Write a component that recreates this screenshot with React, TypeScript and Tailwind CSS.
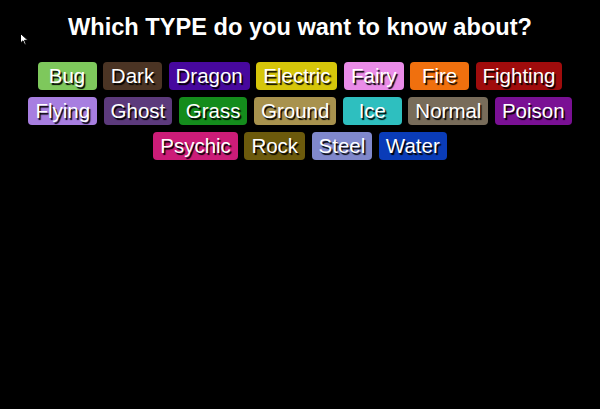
import React from "react";

const types: { name: string; color: string }[] = [
  { name: "Bug", color: "bg-[#7ec85c]" },
  { name: "Dark", color: "bg-[#4b3424]" },
  { name: "Dragon", color: "bg-[#47089e]" },
  { name: "Electric", color: "bg-[#d6c60a]" },
  { name: "Fairy", color: "bg-[#ea8ce8]" },
  { name: "Fire", color: "bg-[#f0700e]" },
  { name: "Fighting", color: "bg-[#a00c0c]" },
  { name: "Flying", color: "bg-[#a77ee0]" },
  { name: "Ghost", color: "bg-[#5c3a7c]" },
  { name: "Grass", color: "bg-[#148c1c]" },
  { name: "Ground", color: "bg-[#a8924e]" },
  { name: "Ice", color: "bg-[#2ebfbf]" },
  { name: "Normal", color: "bg-[#786c5a]" },
  { name: "Poison", color: "bg-[#7a1094]" },
  { name: "Psychic", color: "bg-[#cc1c78]" },
  { name: "Rock", color: "bg-[#6c5a0c]" },
  { name: "Steel", color: "bg-[#8088cc]" },
  { name: "Water", color: "bg-[#0a3cb8]" },
];

const TypeButton = ({ name, color }: { name: string; color: string }) => {
  return (
    <button
      className={`${color} h-[28px] min-w-[59px] px-[7px] rounded-[4px] text-white text-[20.5px] leading-none flex items-center justify-center [text-shadow:1.5px_1.5px_1px_#000] cursor-pointer`}
    >
      {name}
    </button>
  );
};

export default function App() {
  return (
    <div
      className="relative w-[600px] h-[409px] bg-black text-white overflow-hidden"
      style={{ fontFamily: '"Liberation Sans", Arial, sans-serif' }}
    >
      <h1 className="pt-[14px] text-center text-[23.6px] leading-[26px] font-bold">
        Which TYPE do you want to know about?
      </h1>

      <div className="w-[560px] mx-auto mt-[22px] flex flex-wrap justify-center gap-x-[6.5px] gap-y-[7px]">
        {types.map((t) => (
          <TypeButton key={t.name} name={t.name} color={t.color} />
        ))}
      </div>

      {/* mouse pointer */}
      <svg className="absolute left-[20px] top-[33px]" width="9" height="13" viewBox="0 0 9 13">
        <path d="M0.5 0.5 L0.5 10 L3 7.8 L4.8 12 L6.2 11.4 L4.5 7.3 L8 7.3 Z" fill="#fff" stroke="#000" strokeWidth="1" />
      </svg>
    </div>
  );
}
